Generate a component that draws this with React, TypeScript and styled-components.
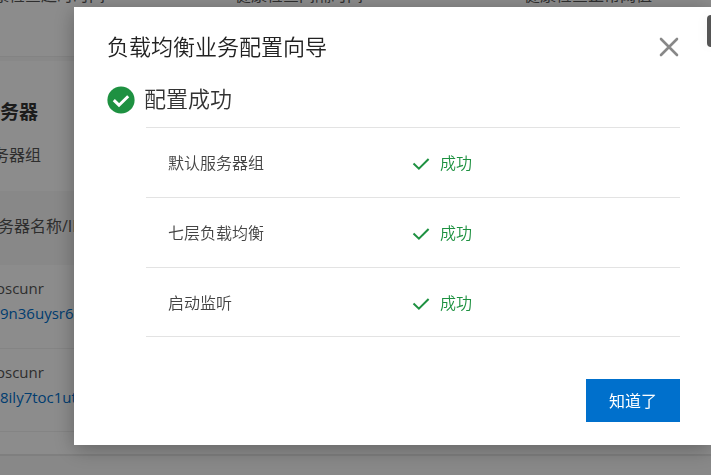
import React from "react";
import styled, { createGlobalStyle } from "styled-components";

const GlobalStyle = createGlobalStyle`
  * { box-sizing: border-box; }
  html, body, #root { height: 100%; }
  body {
    margin: 0;
    overflow: hidden;
    background: #f7f7f7;
    color: #555;
    font-family: "Open Sans", "Noto Sans CJK SC", sans-serif;
    font-size: 16px;
    line-height: 24px;
  }
  h1, h2, h3, p, ul { margin: 0; padding: 0; }
  button { font: inherit; border: 0; cursor: pointer; }
`;

const Page = styled.main`
  display: flex;
  flex-direction: column;
  gap: 4px;
  overflow: hidden;
`;

const HealthCard = styled.section`
  display: grid;
  grid-template-columns: 258px 289px 1fr;
  height: 57px;
  margin-left: -23px;
  background: #fff;
  border-bottom: 1px solid #eee;
`;

const HealthLabel = styled.p`
  margin-top: -17px;
  white-space: nowrap;
`;

const ServerCard = styled.section`
  background: #fff;
  padding-bottom: 22px;
  border-bottom: 2px solid #e8e8e8;
`;

const CardTitle = styled.h2`
  padding-top: 36px;
  color: #333;
  font-size: 19px;
  line-height: 30px;
  font-weight: 700;
`;

const GroupName = styled.p`
  margin: 16px 0 24px -7px;
`;

const ServerTable = styled.table`
  width: 100%;
  border-collapse: collapse;
  text-align: left;
`;

const HeadCell = styled.th`
  height: 74px;
  padding: 0 0 4px;
  background: #f8f8f8;
  font-weight: 400;
  text-indent: -2px;
`;

const BodyCell = styled.td`
  height: 83px;
  padding: 0 0 10px;
  border-bottom: 1px solid #f0f0f0;
  font-size: 15px;
  line-height: 25px;
`;

const ServerName = styled.span`
  display: block;
  margin-left: -4px;
`;

const ServerLink = styled.a`
  display: block;
  color: #0070cc;
  text-decoration: none;
`;

const Overlay = styled.div`
  position: fixed;
  inset: 0;
  padding: 7px 0 30px 74px;
  background: rgba(0, 0, 0, 0.45);
`;

const Dialog = styled.section`
  display: flex;
  flex-direction: column;
  padding: 24px 31px 23px 33px;
  background: #fff;
  box-shadow: 0 4px 20px rgba(0, 0, 0, 0.3);
`;

const DialogHeader = styled.header`
  display: flex;
  align-items: center;
  justify-content: space-between;
  height: 32px;
`;

const DialogTitle = styled.h1`
  padding-bottom: 2px;
  font-size: 22px;
  line-height: 32px;
  font-weight: 350;
  color: #222;
`;

const CloseButton = styled.button`
  display: flex;
  padding: 0;
  background: none;
  color: #888;
`;

const Result = styled.div`
  display: flex;
  align-items: center;
  gap: 9px;
  height: 32px;
  margin: 21px 0 11px;
`;

const ResultTitle = styled.h2`
  padding-bottom: 4px;
  font-size: 22px;
  line-height: 32px;
  font-weight: 350;
  color: #333;
`;

const StepList = styled.ul`
  margin-left: 39px;
  list-style: none;
  border-top: 1px solid #e3e3e3;
`;

const Step = styled.li`
  display: grid;
  grid-template-columns: 244px 1fr;
  align-items: center;
  height: 70px;
  padding: 1px 0 0 22px;
  border-bottom: 1px solid #e3e3e3;
  color: #444;
  font-weight: 350;

  &:last-child {
    height: 69px;
  }
`;

const StepState = styled.span`
  display: flex;
  align-items: center;
  gap: 10px;
  color: #1e9141;
`;

const DialogFooter = styled.footer`
  display: flex;
  justify-content: flex-end;
  padding-top: 42px;
`;

const PrimaryButton = styled.button`
  height: 43px;
  padding: 0 23px;
  background: #0070cc;
  color: #fff;
`;

const SideTab = styled.div`
  position: absolute;
  top: 15px;
  right: 0;
  width: 4px;
  height: 32px;
  border-radius: 6px 0 0 6px;
  background: #555;
  box-shadow: 0 0 12px rgba(0, 0, 0, 0.08);
`;

const servers = [
  { name: "oscunr", id: "9n36uysr6m" },
  { name: "oscunr", id: "8ily7toc1ut" },
];

const steps = ["默认服务器组", "七层负载均衡", "启动监听"];

export default function App() {
  return (
    <>
      <GlobalStyle />
      <Page>
        <HealthCard>
          <HealthLabel>健康检查超时时间</HealthLabel>
          <HealthLabel>健康检查间隔时间</HealthLabel>
          <HealthLabel>健康检查正常阈值</HealthLabel>
        </HealthCard>
        <ServerCard>
          <CardTitle>务器</CardTitle>
          <GroupName>务器组</GroupName>
          <ServerTable>
            <thead>
              <tr>
                <HeadCell>务器名称/ID</HeadCell>
              </tr>
            </thead>
            <tbody>
              {servers.map((server) => (
                <tr key={server.id}>
                  <BodyCell>
                    <ServerName>{server.name}</ServerName>
                    <ServerLink href="#">{server.id}</ServerLink>
                  </BodyCell>
                </tr>
              ))}
            </tbody>
          </ServerTable>
        </ServerCard>
      </Page>
      <Overlay>
        <Dialog role="dialog" aria-modal="true" aria-labelledby="wizard-title">
          <DialogHeader>
            <DialogTitle id="wizard-title">负载均衡业务配置向导</DialogTitle>
            <CloseButton type="button" aria-label="关闭">
              <svg width="22" height="22" viewBox="0 0 22 22" fill="none" stroke="currentColor" strokeWidth="2.6" strokeLinecap="round">
                <path d="M3 3l16 16M19 3L3 19" />
              </svg>
            </CloseButton>
          </DialogHeader>
          <Result>
            <svg width="28" height="28" viewBox="0 0 28 28" fill="none" aria-hidden="true">
              <circle cx="14" cy="14" r="13.6" fill="#1e9141" />
              <path d="M6.8 14.2l5.2 5 9.2-9" stroke="#fff" strokeWidth="3" />
            </svg>
            <ResultTitle>配置成功</ResultTitle>
          </Result>
          <StepList>
            {steps.map((step) => (
              <Step key={step}>
                <span>{step}</span>
                <StepState>
                  <svg width="18" height="18" viewBox="0 0 18 18" fill="none" stroke="currentColor" strokeWidth="2" aria-hidden="true">
                    <path d="M1.5 9.5l5.4 5.2L16.6 5" />
                  </svg>
                  成功
                </StepState>
              </Step>
            ))}
          </StepList>
          <DialogFooter>
            <PrimaryButton type="button">知道了</PrimaryButton>
          </DialogFooter>
        </Dialog>
        <SideTab />
      </Overlay>
    </>
  );
}
